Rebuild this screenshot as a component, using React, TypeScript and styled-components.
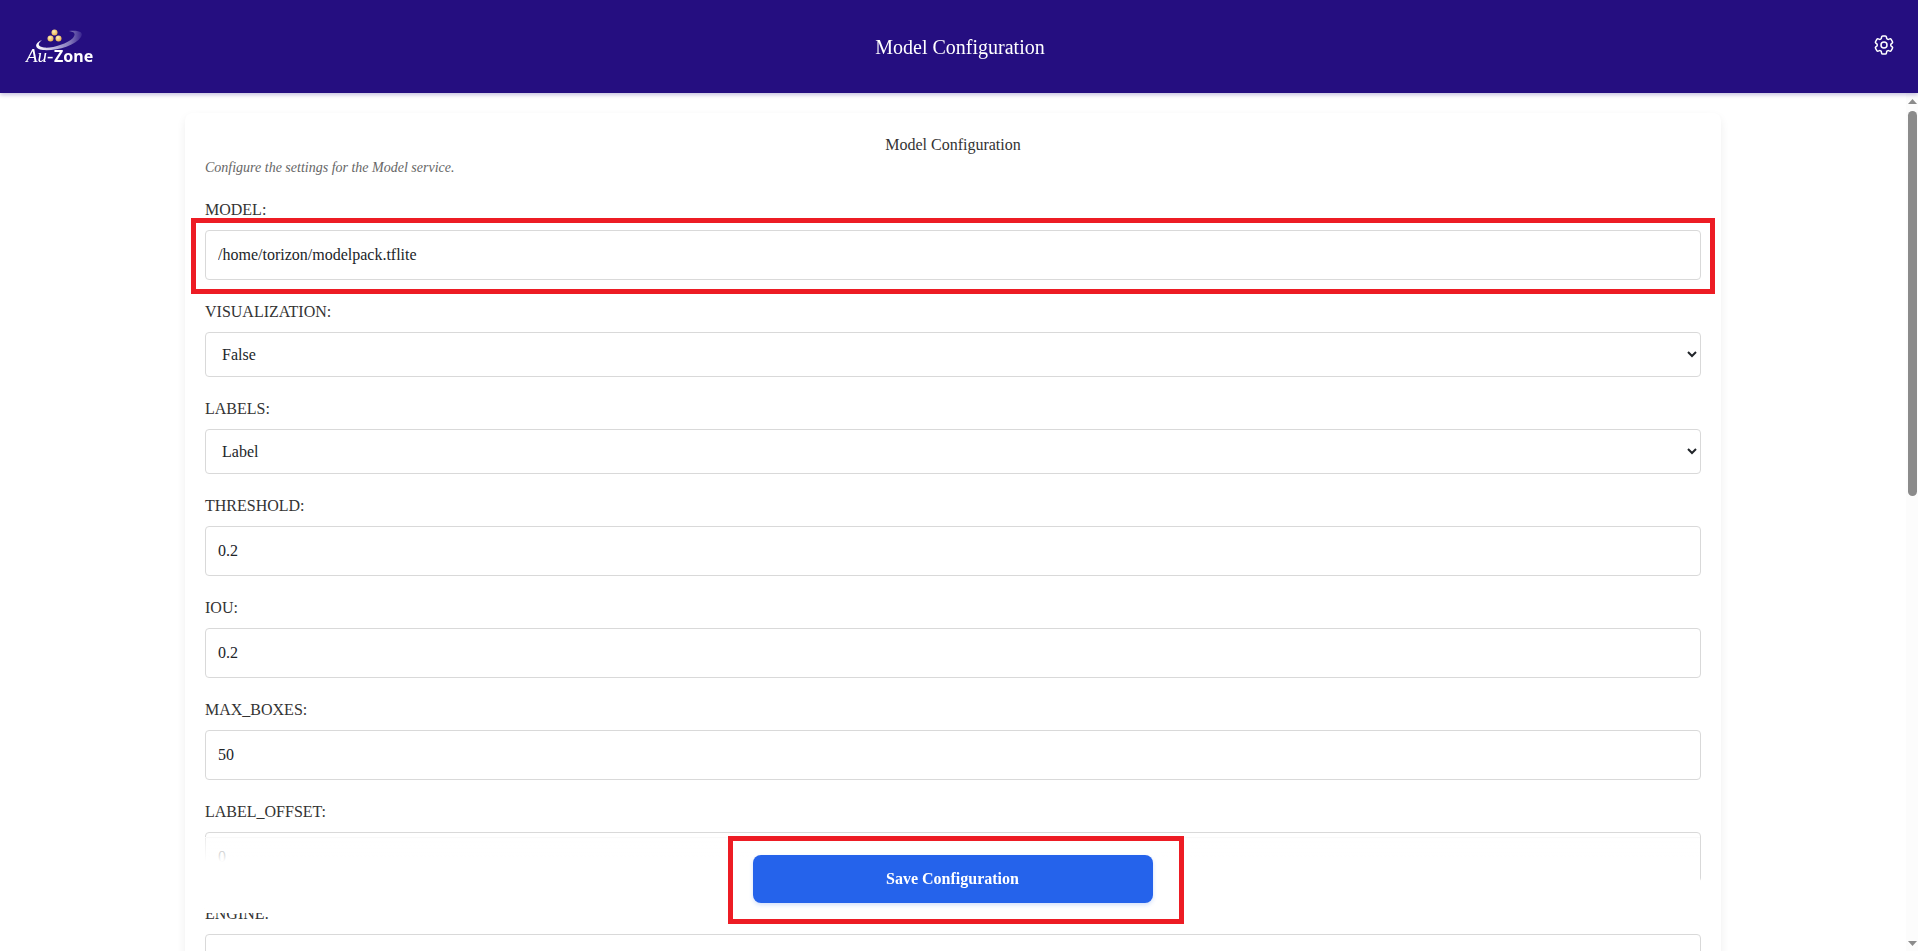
import React, { useId } from "react";
import styled, { createGlobalStyle } from "styled-components";
import { HiOutlineCog6Tooth } from "react-icons/hi2";

const GlobalStyle = createGlobalStyle`
  *, *::before, *::after { box-sizing: border-box; }
  body {
    margin: 0;
    background: #fff;
    color: #333;
    font-family: "Liberation Serif", "Times New Roman", serif;
    font-size: 16px;
    line-height: 24px;
  }
`;

const Page = styled.div`
  display: flex;
  flex-direction: column;
  height: 100vh;
`;

const Header = styled.header`
  display: grid;
  grid-template-columns: 1fr auto 1fr;
  align-items: center;
  flex: none;
  height: 93px;
  padding: 0 22px 0 24px;
  background: #250e80;
  color: #fff;
  box-shadow: 0 2px 4px rgba(37, 14, 128, 0.25);
  z-index: 2;
`;

const HomeLink = styled.a`
  display: block;
  justify-self: start;
  line-height: 0;
`;

const HeaderTitle = styled.h1`
  margin: 0;
  font-size: 20px;
  font-weight: 400;
  line-height: 24px;
`;

const IconButton = styled.button`
  justify-self: end;
  display: flex;
  margin: 0 0 4px;
  padding: 0;
  border: 0;
  background: none;
  color: #fff;
  cursor: pointer;
`;

const Body = styled.div`
  display: flex;
  flex: 1;
  min-height: 0;
`;

const ScrollArea = styled.main`
  flex: 1;
  min-width: 0;
  overflow-y: auto;
  scrollbar-width: none;
  padding: 20px;
`;

const Card = styled.form`
  max-width: 1536px;
  margin: 0 auto;
  padding: 20px;
  border-radius: 8px;
  background: #fff;
  box-shadow: 0 4px 10px rgba(0, 0, 0, 0.07);
`;

const CardTitle = styled.h2`
  margin: 0;
  font-size: 16px;
  font-weight: 400;
  line-height: 24px;
  text-align: center;
`;

const Description = styled.p`
  margin: 0 0 20px;
  color: #666;
  font-size: 14px;
  font-style: italic;
  line-height: 21px;
`;

const FieldBox = styled.div`
  display: flex;
  flex-direction: column;
  gap: 8px;
  margin-bottom: 20px;
`;

const Control = styled.div`
  position: relative;
  display: flex;
`;

const TextInput = styled.input`
  width: 100%;
  height: 50px;
  padding: 0 12px;
  border: 1px solid #d9d9d9;
  border-radius: 4px;
  background: #fff;
  color: #212529;
  font: inherit;
`;

const Select = styled.select`
  width: 100%;
  height: 45px;
  padding: 0 0 0 12px;
  border: 1px solid #d9d9d9;
  border-radius: 4px;
  background: #fff;
  color: #212529;
  font: inherit;
`;

const SaveBar = styled.div`
  position: sticky;
  bottom: 18px;
  z-index: 1;
  display: flex;
  justify-content: center;
  margin-right: 1px;
  padding: 17px 0 10px;
  border-top: 1px solid #f9f9f9;
  background: linear-gradient(to bottom, rgba(255, 255, 255, 0.5), #fff 32%);
`;

const SaveSlot = styled.div`
  position: relative;
  width: 400px;
`;

const SaveButton = styled.button`
  display: block;
  width: 100%;
  height: 48px;
  border: 0;
  border-radius: 8px;
  background: #2563eb;
  color: #fff;
  font: inherit;
  font-weight: 700;
  box-shadow: 0 2px 4px rgba(37, 99, 235, 0.2);
  cursor: pointer;
`;

const Highlight = styled.span<{ $inset: string }>`
  position: absolute;
  inset: ${(p) => p.$inset};
  border: 5px solid #ed1c24;
  pointer-events: none;
`;

const ScrollRail = styled.div`
  display: flex;
  flex-direction: column;
  align-items: center;
  gap: 7px;
  flex: none;
  width: 12px;
  padding: 6px 1px 5px 2px;
  background: #fcfcfc;
`;

const Arrow = styled.span<{ $down?: boolean }>`
  width: 9px;
  height: 5px;
  background: #8b8b8b;
  clip-path: ${(p) =>
    p.$down ? "polygon(0 0, 100% 0, 50% 100%)" : "polygon(50% 0, 100% 100%, 0 100%)"};
`;

const Track = styled.div`
  flex: 1;
  width: 9px;
`;

const Thumb = styled.div`
  height: 46.8%;
  border-radius: 5px;
  background: #8b8b8b;
`;

function Logo() {
  return (
    <svg width="76" height="44" viewBox="1 0 76 44" role="img" aria-label="Au-Zone">
      <defs>
        <linearGradient id="swoosh" x1="0" y1="0" x2="1" y2="0">
          <stop offset="0" stopColor="#fff" />
          <stop offset="0.35" stopColor="#c3bce2" />
          <stop offset="0.75" stopColor="#8176b8" />
          <stop offset="1" stopColor="#3a2590" />
        </linearGradient>
        <radialGradient id="gold" cx="0.4" cy="0.35" r="0.7">
          <stop offset="0" stopColor="#fff0b8" />
          <stop offset="1" stopColor="#e6ab4a" />
        </radialGradient>
      </defs>
      <path
        d="M19 15C11 18 11 24 20 25C33 26 52 21 58 12C61 7 56 5 46 6C52 7 53 9 50 13C44 19 29 23.500 21 22.500C15 21.500 14 19 19 15Z"
        fill="url(#swoosh)"
      />
      <circle cx="31.500" cy="7.500" r="3" fill="url(#gold)" />
      <circle cx="27.500" cy="13.500" r="3" fill="url(#gold)" />
      <circle cx="35.500" cy="13.500" r="3" fill="url(#gold)" />
      <text x="3" y="37" fill="#fff" fontFamily="Liberation Serif, serif" fontStyle="italic" fontSize="19">
        Au-
      </text>
      <text x="31" y="37" fill="#fff" fontFamily="Noto Sans, sans-serif" fontWeight="700" fontSize="16">
        Zone
      </text>
    </svg>
  );
}

type FieldProps = {
  name: string;
  value?: string;
  options?: string[];
  highlighted?: boolean;
};

function Field({ name, value = "", options, highlighted }: FieldProps) {
  const id = useId();
  return (
    <FieldBox>
      <label htmlFor={id}>{name}:</label>
      <Control>
        {options ? (
          <Select id={id} defaultValue={options[0]}>
            {options.map((o) => (
              <option key={o}>{o}</option>
            ))}
          </Select>
        ) : (
          <TextInput id={id} type="text" defaultValue={value} />
        )}
        {highlighted && <Highlight $inset="-12px -14px -14px" />}
      </Control>
    </FieldBox>
  );
}

const fields: FieldProps[] = [
  { name: "MODEL", value: "/home/torizon/modelpack.tflite", highlighted: true },
  { name: "VISUALIZATION", options: ["False", "True"] },
  { name: "LABELS", options: ["Label", "Score"] },
  { name: "THRESHOLD", value: "0.2" },
  { name: "IOU", value: "0.2" },
  { name: "MAX_BOXES", value: "50" },
  { name: "LABEL_OFFSET", value: "0" },
  { name: "ENGINE" },
];

export default function App() {
  return (
    <Page>
      <GlobalStyle />
      <Header>
        <HomeLink href="#">
          <Logo />
        </HomeLink>
        <HeaderTitle>Model Configuration</HeaderTitle>
        <IconButton type="button" aria-label="Settings">
          <HiOutlineCog6Tooth size={24} />
        </IconButton>
      </Header>
      <Body>
        <ScrollArea>
          <Card onSubmit={(e) => e.preventDefault()}>
            <CardTitle>Model Configuration</CardTitle>
            <Description>Configure the settings for the Model service.</Description>
            {fields.map((f) => (
              <Field key={f.name} {...f} />
            ))}
            <SaveBar>
              <SaveSlot>
                <SaveButton type="submit">Save Configuration</SaveButton>
                <Highlight $inset="-19px -31px -21px -25px" />
              </SaveSlot>
            </SaveBar>
          </Card>
        </ScrollArea>
        <ScrollRail aria-hidden="true">
          <Arrow />
          <Track>
            <Thumb />
          </Track>
          <Arrow $down />
        </ScrollRail>
      </Body>
    </Page>
  );
}
